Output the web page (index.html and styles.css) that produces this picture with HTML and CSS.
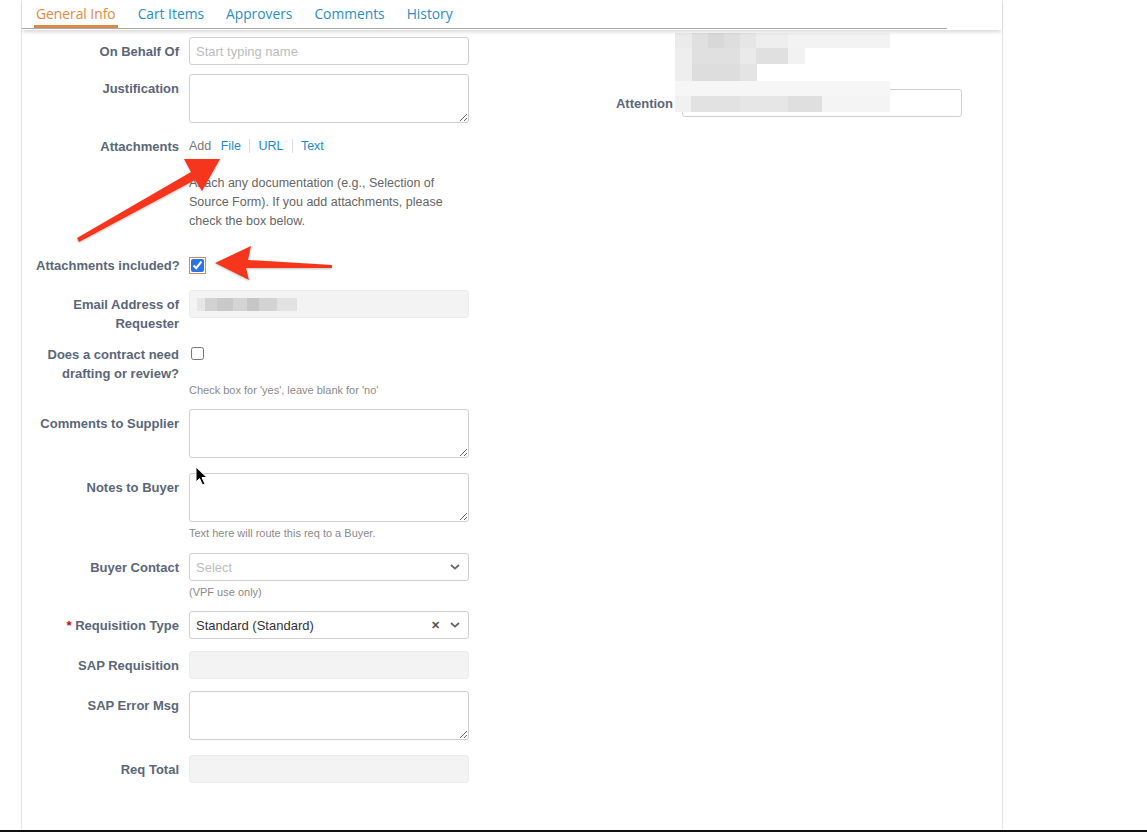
FILE: index.html
```html
<!DOCTYPE html>
<html lang="en">
<head>
  <meta charset="UTF-8">
  <title>Requisition - General Info</title>
  <link rel="stylesheet" href="styles.css">
</head>
<body>
  <div class="page">
    <!-- Tabs -->
    <nav class="tabs">
      <ul class="tab-list">
        <li><a class="tab active" href="#">General Info</a></li>
        <li><a class="tab" href="#">Cart Items</a></li>
        <li><a class="tab" href="#">Approvers</a></li>
        <li><a class="tab" href="#">Comments</a></li>
        <li><a class="tab" href="#">History</a></li>
      </ul>
    </nav>

    <div class="form">
      <!-- Left column -->
      <div class="col-left">
        <div class="row tight">
          <label class="label nowrap">On Behalf Of</label>
          <div class="control"><input class="field" type="text" placeholder="Start typing name"></div>
        </div>

        <div class="row tight">
          <label class="label nowrap">Justification</label>
          <div class="control"><textarea class="field area"></textarea></div>
        </div>

        <div class="row after-help">
          <label class="label nowrap">Attachments</label>
          <div class="control">
            <div class="attach-links">
              <span class="add">Add</span>
              <a href="#">File</a>
              <a href="#">URL</a>
              <a href="#">Text</a>
            </div>
            <p class="help-lg">Attach any documentation (e.g., Selection of Source Form). If you add attachments, please check the box below.</p>
          </div>
        </div>

        <div class="row check-row">
          <label class="label nowrap">Attachments included?</label>
          <div class="control centered"><input class="check focused" type="checkbox" checked></div>
        </div>

        <div class="row snug">
          <label class="label">Email Address of Requester</label>
          <div class="control">
            <div class="field disabled"><span class="redact-email"></span></div>
          </div>
        </div>

        <div class="row">
          <label class="label">Does a contract need drafting or review?</label>
          <div class="control">
            <input class="check plain" type="checkbox">
            <p class="help contract-help">Check box for 'yes', leave blank for 'no'</p>
          </div>
        </div>

        <div class="row loose">
          <label class="label nowrap">Comments to Supplier</label>
          <div class="control"><textarea class="field area"></textarea></div>
        </div>

        <div class="row notes">
          <label class="label nowrap">Notes to Buyer</label>
          <div class="control">
            <textarea class="field area"></textarea>
            <p class="help">Text here will route this req to a Buyer.</p>
          </div>
        </div>

        <div class="row">
          <label class="label nowrap">Buyer Contact</label>
          <div class="control">
            <div class="field select">
              <span class="placeholder">Select</span>
              <svg class="chev" width="10" height="6" viewBox="0 0 10 6"><path d="M1 1l4 3.6L9 1" fill="none" stroke="#666" stroke-width="1.8"/></svg>
            </div>
            <p class="help">(VPF use only)</p>
          </div>
        </div>

        <div class="row">
          <label class="label nowrap"><span class="req">*</span> Requisition Type</label>
          <div class="control">
            <div class="field select">
              <span class="value">Standard (Standard)</span>
              <span class="clear">&#x2715;</span>
              <svg class="chev" width="10" height="6" viewBox="0 0 10 6"><path d="M1 1l4 3.6L9 1" fill="none" stroke="#666" stroke-width="1.8"/></svg>
            </div>
          </div>
        </div>

        <div class="row">
          <label class="label nowrap">SAP Requisition</label>
          <div class="control"><div class="field disabled"></div></div>
        </div>

        <div class="row loose">
          <label class="label nowrap">SAP Error Msg</label>
          <div class="control"><textarea class="field area"></textarea></div>
        </div>

        <div class="row">
          <label class="label nowrap">Req Total</label>
          <div class="control"><div class="field disabled"></div></div>
        </div>
      </div>

      <!-- Right column -->
      <div class="col-right">
        <div class="row-r">
          <label class="label nowrap">Attention</label>
          <div class="control"><input class="field" type="text"></div>
        </div>
        <!-- redacted values -->
        <div class="mosaic">
          <div class="m m1"></div>
          <div class="m m2"></div>
          <div class="m m3"></div>
          <div class="m m4"></div>
          <div class="m m5"></div>
        </div>
      </div>
    </div>
  </div>

  <!-- Screenshot annotations -->
  <svg class="annotations" width="1147" height="832" viewBox="0 0 1147 832">
    <defs>
      <filter id="shade" x="-10%" y="-10%" width="120%" height="120%">
        <feDropShadow dx="0" dy="1" stdDeviation="1" flood-color="#000" flood-opacity="0.25"/>
      </filter>
    </defs>
    <polygon filter="url(#shade)" fill="#f5361d"
      points="77,238 191,172 184,159 220,159 202,191 195,180 79,242"/>
    <polygon filter="url(#shade)" fill="#f5361d"
      points="332,265 248,260 251,246 215,263 249,280 246,268 332,268"/>
    <path d="M196 467 L196 482 L199.5 478.5 L202.5 485 L205 484 L202 477.5 L207 477.5 Z"
      fill="#000" stroke="#fff" stroke-width="1"/>
  </svg>
  <div class="screen-edge"></div>
</body>
</html>
```

FILE: styles.css
```css
/* Reset */
* {
  box-sizing: border-box;
}

body {
  margin: 0;
  height: 832px;
  overflow: hidden;
  background: #ffffff;
  font-family: "Liberation Sans", Arial, sans-serif;
  position: relative;
}

/* Page panel */
.page {
  margin-left: 21px;
  width: 982px;
  height: 830px;
  border-left: 1px solid #e4e4e4;
  border-right: 1px solid #e4e4e4;
}

/* Tabs */
.tabs {
  position: relative;
  z-index: 1;
  height: 30px;
  background: #fff;
  box-shadow: 0 3px 4px -1px rgba(0, 0, 0, 0.16);
}

.tab-list {
  display: flex;
  margin: 0 55px 0 0;
  padding: 0 0 0 3px;
  list-style: none;
  height: 29px;
  border-bottom: 1px solid #a9a9a9;
}

.tab {
  display: block;
  margin: 0 9px;
  padding: 4px 2px 0;
  height: 28px;
  font-family: "Open Sans", sans-serif;
  font-size: 13.8px;
  line-height: 20px;
  color: #2a8dc5;
  text-decoration: none;
  border-bottom: 3px solid transparent;
}

.tab.active {
  color: #e3883c;
  border-bottom-color: #da8a48;
}

/* Form layout */
.form {
  display: flex;
  padding-top: 7px;
}

.col-left {
  width: 458px;
  padding-left: 14px;
}

.col-right {
  flex: 1;
  position: relative;
  padding-right: 40px;
}

.row {
  display: grid;
  grid-template-columns: 143px 280px;
  column-gap: 10px;
  margin-bottom: 12px;
}

.row.tight { margin-bottom: 9px; }
.row.after-help { margin-bottom: 20px; }
.row.check-row { margin-bottom: 11px; }
.row.snug { margin-bottom: 7px; }
.row.loose { margin-bottom: 15px; }
.row.notes { margin-bottom: 13px; }

.row-r {
  display: grid;
  grid-template-columns: 1fr 280px;
  column-gap: 9px;
  margin-top: 52px;
}

.label {
  text-align: right;
  font-weight: bold;
  font-size: 13px;
  line-height: 19px;
  padding-top: 5px;
  color: #5b6678;
}

.nowrap {
  white-space: nowrap;
}

.req {
  color: #d0021b;
}

.control {
  min-width: 0;
}

.control.centered {
  display: flex;
  align-items: center;
  height: 28px;
}

/* Inputs */
.field {
  display: block;
  width: 100%;
  height: 28px;
  margin: 0;
  padding: 0 6px;
  border: 1px solid #cfcfcf;
  border-radius: 3px;
  background: #fff;
  font-family: "Liberation Sans", Arial, sans-serif;
  font-size: 13px;
  color: #333;
}

.field::placeholder {
  color: #bcbcbc;
}

.field.area {
  height: 49px;
  padding: 5px 6px;
  resize: vertical;
}

.field.disabled {
  background: #f3f3f3;
  border-color: #ececec;
  display: flex;
  align-items: center;
}

.field.select {
  display: flex;
  align-items: center;
  padding: 0 8px 0 6px;
}

.select .placeholder {
  flex: 1;
  color: #bdbdbd;
}

.select .value {
  flex: 1;
  color: #333;
}

.select .clear {
  font-size: 11px;
  font-weight: bold;
  color: #555;
  margin-right: 10px;
}

.redact-email {
  display: block;
  width: 100px;
  height: 13px;
  margin-left: 1px;
  background: linear-gradient(to right, #e6e6e6 0 8px, #d2d2d2 8px 20px, #c9c9c9 20px 36px, #d4d4d4 36px 50px, #c6c6c6 50px 62px, #d3d3d3 62px 80px, #e2e2e2 80px 100px);
}

/* Attachments */
.attach-links {
  height: 28px;
  line-height: 28px;
  font-size: 12.5px;
}

.attach-links .add {
  color: #777;
  margin-right: 6px;
}

.attach-links a {
  color: #1b8bc9;
  text-decoration: none;
  padding: 0 5px 0 8px;
  border-left: 1px solid #dcdcdc;
}

.attach-links a:first-of-type {
  border-left: none;
  padding-left: 0;
}

.help-lg {
  margin: 14px 0 0;
  font-size: 12.5px;
  line-height: 19px;
  color: #666;
}

.help {
  margin: 4px 0 0;
  font-size: 11px;
  line-height: 14px;
  color: #8a8a8a;
}

.help.contract-help {
  margin-top: 23px;
}

/* Checkboxes */
.check {
  width: 13px;
  height: 13px;
  margin: 0 0 0 2px;
  accent-color: #2b74e6;
}

.check.focused {
  outline: 1px solid #cf8b5b;
  outline-offset: 1px;
}

.check.plain {
  display: block;
  margin-top: 7px;
}

/* Redacted block, right column */
.mosaic {
  position: absolute;
  left: 195px;
  top: -4px;
}

.m {
  height: 15px;
}

.m1 {
  width: 215px;
  background: linear-gradient(to right, #ebebeb 0 17px, #e0e0e0 17px 33px, #d8d8d8 33px 49px, #dedede 49px 65px, #e6e6e6 65px 81px, #eeeeee 81px 113px, #f3f3f3 113px 215px);
}

.m2 {
  width: 130px;
  height: 16px;
  background: linear-gradient(to right, #eeeeee 0 17px, #e0e0e0 17px 65px, #eaeaea 65px 81px, #e0e0e0 81px 113px, #f2f2f2 113px 130px);
}

.m3 {
  width: 82px;
  height: 17px;
  background: linear-gradient(to right, #eeeeee 0 17px, #dddddd 17px 65px, #e4e4e4 65px 82px);
}

.m4 {
  width: 215px;
  background: #f6f6f6;
}

.m5 {
  width: 215px;
  height: 16px;
  background: linear-gradient(to right, #f1f1f1 0 16px, #e2e2e2 16px 65px, #e6e6e6 65px 113px, #dfdfdf 113px 147px, #f4f4f4 147px 215px);
}

/* Annotations overlay */
.annotations {
  position: absolute;
  left: 0;
  top: 0;
  pointer-events: none;
  z-index: 5;
}

.screen-edge {
  height: 2px;
  background: #111;
}
```
